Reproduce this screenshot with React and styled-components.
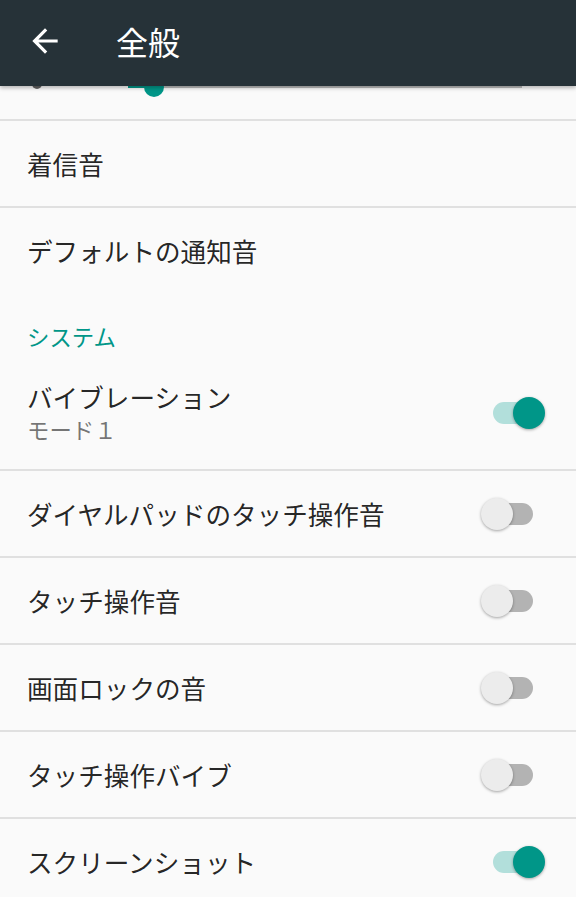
import React from 'react';
import styled, { createGlobalStyle } from 'styled-components';

const GlobalStyle = createGlobalStyle`
  html, body {
    margin: 0;
    padding: 0;
    background: #fafafa;
  }
  body {
    font-family: "Noto Sans CJK JP", "Noto Sans", Roboto, sans-serif;
    -webkit-font-smoothing: antialiased;
  }
`;

const Screen = styled.div`
  width: 576px;
  height: 897px;
  overflow: hidden;
  background: #fafafa;
  display: flex;
  flex-direction: column;
`;

const Toolbar = styled.header`
  position: relative;
  z-index: 2;
  flex: none;
  height: 86px;
  background: #263238;
  display: flex;
  align-items: center;
  padding-left: 26px;
  box-shadow: 0 2px 4px rgba(0, 0, 0, 0.28);
`;

const BackButton = styled.div`
  width: 38px;
  height: 38px;
  margin-top: -4px;
  display: flex;
  align-items: center;
  justify-content: center;
`;

const Title = styled.h1`
  margin: -4px 0 0 52px;
  font-size: 32px;
  font-weight: 400;
  line-height: 40px;
  color: #ffffff;
  font-family: "Noto Sans CJK JP", sans-serif;
`;

const List = styled.div`
  display: flex;
  flex-direction: column;
  flex: none;
`;

const SliderRow = styled.div`
  height: 33px;
  display: flex;
  align-items: flex-start;
  padding: 0 54px 0 32px;
  border-bottom: 2px solid #e0e0e0;
`;

const VolumeIcon = styled.div`
  width: 10px;
  height: 10px;
  margin-top: -7px;
  margin-right: 86px;
  border-radius: 50%;
  background: #616161;
`;

const Track = styled.div`
  position: relative;
  flex: 1;
  height: 3px;
  margin-top: -1px;
  background: linear-gradient(
    to right,
    #009688 0,
    #009688 ${({ $fill }) => $fill}px,
    #bdbdbd ${({ $fill }) => $fill}px
  );
`;

const SliderThumb = styled.div`
  position: absolute;
  top: 50%;
  left: ${({ $fill }) => $fill}px;
  width: 20px;
  height: 20px;
  margin: -10px 0 0 -10px;
  border-radius: 50%;
  background: #009688;
`;

const Row = styled.div`
  display: flex;
  align-items: center;
  flex: none;
  box-sizing: border-box;
  min-height: ${({ $last }) => ($last ? '85px' : '87px')};
  padding: ${({ $tall }) => ($tall ? '24px 31px 24px 27px' : '0 31px 0 27px')};
  border-bottom: ${({ $last }) => ($last ? 'none' : '2px solid #e0e0e0')};
`;

const Texts = styled.div`
  flex: 1;
  display: flex;
  flex-direction: column;
`;

const RowTitle = styled.div`
  font-size: 25.6px;
  line-height: 32px;
  color: rgba(0, 0, 0, 0.87);
`;

const Summary = styled.div`
  font-size: 22.4px;
  line-height: 32px;
  color: rgba(0, 0, 0, 0.54);
`;

const Category = styled.div`
  height: 64px;
  box-sizing: border-box;
  display: flex;
  align-items: flex-end;
  padding: 0 27px 8px;
  font-size: 22.4px;
  line-height: 26px;
  color: #009688;
`;

const SwitchBox = styled.div`
  position: relative;
  width: 64px;
  height: 32px;
  flex: none;
`;

const SwitchTrack = styled.div`
  position: absolute;
  left: 12px;
  top: 5px;
  width: 40px;
  height: 22px;
  border-radius: 11px;
  background: ${({ $on }) => ($on ? '#b2dfdb' : '#b3b3b3')};
`;

const SwitchThumb = styled.div`
  position: absolute;
  top: 0;
  left: ${({ $on }) => ($on ? '32px' : '0')};
  width: 32px;
  height: 32px;
  border-radius: 50%;
  background: ${({ $on }) => ($on ? '#009688' : '#ececec')};
  box-shadow: 0 1px 3px rgba(0, 0, 0, 0.35);
`;

function Switch({ on }) {
    return (
        <SwitchBox>
            <SwitchTrack $on={on} />
            <SwitchThumb $on={on} />
        </SwitchBox>
    );
}

function ArrowBack() {
    return (
        <svg width="38" height="38" viewBox="0 0 24 24">
            <path
                d="M20 11H7.83l5.59-5.59L12 4l-8 8 8 8 1.41-1.41L7.83 13H20v-2z"
                fill="#ffffff"
            />
        </svg>
    );
}

const toggles = [
    { title: 'ダイヤルパッドのタッチ操作音', on: false },
    { title: 'タッチ操作音', on: false },
    { title: '画面ロックの音', on: false },
    { title: 'タッチ操作バイブ', on: false },
    { title: 'スクリーンショット', on: true },
];

export default function App() {
    const fill = 26;
    return (
        <Screen>
            <GlobalStyle />
            <Toolbar>
                <BackButton>
                    <ArrowBack />
                </BackButton>
                <Title>全般</Title>
            </Toolbar>
            <List>
                <SliderRow>
                    <VolumeIcon />
                    <Track $fill={fill}>
                        <SliderThumb $fill={fill} />
                    </Track>
                </SliderRow>
                <Row>
                    <Texts>
                        <RowTitle>着信音</RowTitle>
                    </Texts>
                </Row>
                <Row $last>
                    <Texts>
                        <RowTitle>デフォルトの通知音</RowTitle>
                    </Texts>
                </Row>
                <Category>システム</Category>
                <Row $tall>
                    <Texts>
                        <RowTitle>バイブレーション</RowTitle>
                        <Summary>モード１</Summary>
                    </Texts>
                    <Switch on />
                </Row>
                {toggles.map(t => (
                    <Row key={t.title}>
                        <Texts>
                            <RowTitle>{t.title}</RowTitle>
                        </Texts>
                        <Switch on={t.on} />
                    </Row>
                ))}
            </List>
        </Screen>
    );
}
